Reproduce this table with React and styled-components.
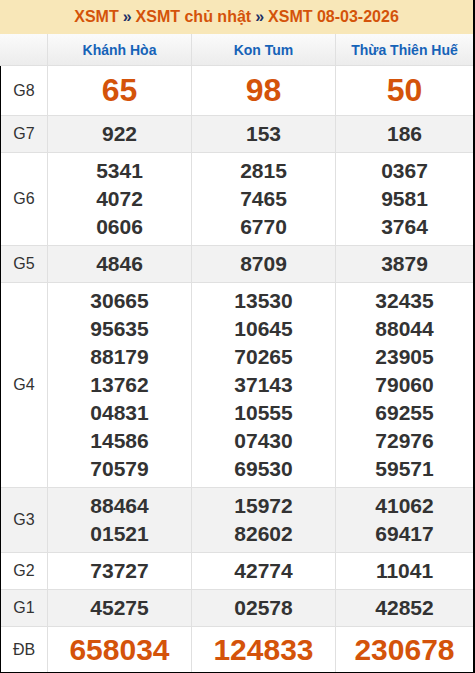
import React from "react";
import styled, { createGlobalStyle } from "styled-components";

const Global = createGlobalStyle`
  html, body { margin: 0; padding: 0; background: #fff; }
  body { font-family: "Liberation Sans", Arial, sans-serif; }
`;

const Page = styled.div`
  width: 475px;
  box-sizing: border-box;
  border-right: 2px solid #000;
  font-family: "Liberation Sans", Arial, sans-serif;
`;

const Title = styled.div`
  height: 34px;
  background: #f8e7b8;
  display: flex;
  align-items: center;
  justify-content: center;
  font-size: 16px;
  font-weight: bold;
  color: #d4530a;
`;

const Sep = styled.span`
  color: #1b2f66;
  margin: 0 4px;
`;

const Grid = styled.div`
  display: grid;
  grid-template-columns: ${(p) => (p.$head ? "48px" : "47px")} 144px 144px 1fr;
  border-left: ${(p) => (p.$head ? "none" : "1px solid #000")};
  border-bottom: ${(p) => (p.$head ? "none" : "1px solid #000")};
`;

const HeadCell = styled.div`
  height: 32px;
  box-sizing: border-box;
  border-bottom: 1px solid #e0e0e0;
  border-right: ${(p) => (p.$last ? "none" : "1px solid #e0e0e0")};
  background: linear-gradient(#fbfbfb, #ececec);
  display: flex;
  align-items: center;
  justify-content: center;
  font-size: 14px;
  font-weight: bold;
  color: #1663b8;
`;

const Label = styled.div`
  box-sizing: border-box;
  border-right: 1px solid #e0e0e0;
  border-bottom: ${(p) => (p.$last ? "none" : "1px solid #e0e0e0")};
  background: ${(p) => (p.$alt ? "#f2f2f2" : "#fff")};
  display: flex;
  align-items: center;
  justify-content: center;
  font-size: 16px;
  color: #333;
`;

const Cell = styled.div`
  box-sizing: border-box;
  padding: 4px 0;
  border-right: ${(p) => (p.$lastCol ? "none" : "1px solid #e0e0e0")};
  border-bottom: ${(p) => (p.$last ? "none" : "1px solid #e0e0e0")};
  background: ${(p) => (p.$alt ? "#f2f2f2" : "#fff")};
  display: flex;
  flex-direction: column;
  align-items: center;
  justify-content: center;
`;

const Num = styled.div`
  font-weight: bold;
  font-size: ${(p) => (p.$size === "g8" ? "32px" : p.$size === "db" ? "30px" : "21px")};
  line-height: ${(p) => (p.$size === "g8" ? "41px" : p.$size === "db" ? "37px" : "28px")};
  color: ${(p) => (p.$size ? "#d4530a" : "#333")};
`;

const provinces = ["Khánh Hòa", "Kon Tum", "Thừa Thiên Huế"];

const rows = [
  { label: "G8", size: "g8", data: [["65"], ["98"], ["50"]] },
  { label: "G7", data: [["922"], ["153"], ["186"]] },
  { label: "G6", data: [["5341", "4072", "0606"], ["2815", "7465", "6770"], ["0367", "9581", "3764"]] },
  { label: "G5", data: [["4846"], ["8709"], ["3879"]] },
  {
    label: "G4",
    data: [
      ["30665", "95635", "88179", "13762", "04831", "14586", "70579"],
      ["13530", "10645", "70265", "37143", "10555", "07430", "69530"],
      ["32435", "88044", "23905", "79060", "69255", "72976", "59571"],
    ],
  },
  { label: "G3", data: [["88464", "01521"], ["15972", "82602"], ["41062", "69417"]] },
  { label: "G2", data: [["73727"], ["42774"], ["11041"]] },
  { label: "G1", data: [["45275"], ["02578"], ["42852"]] },
  { label: "ĐB", size: "db", data: [["658034"], ["124833"], ["230678"]] },
];

export default function App() {
  return (
    <>
      <Global />
      <Page>
        <Title>
          XSMT<Sep>»</Sep>XSMT chủ nhật<Sep>»</Sep>XSMT 08-03-2026
        </Title>
        <Grid $head>
          <HeadCell />
          {provinces.map((p, i) => (
            <HeadCell key={p} $last={i === 2}>
              {p}
            </HeadCell>
          ))}
        </Grid>
        <Grid>
          {rows.map((r, ri) => {
            const alt = ri % 2 === 1;
            const last = ri === rows.length - 1;
            return (
              <React.Fragment key={r.label}>
                <Label $alt={alt} $last={last}>{r.label}</Label>
                {r.data.map((col, ci) => (
                  <Cell key={ci} $alt={alt} $last={last} $lastCol={ci === 2}>
                    {col.map((n, ni) => (
                      <Num key={ni} $size={r.size}>
                        {n}
                      </Num>
                    ))}
                  </Cell>
                ))}
              </React.Fragment>
            );
          })}
        </Grid>
      </Page>
    </>
  );
}
